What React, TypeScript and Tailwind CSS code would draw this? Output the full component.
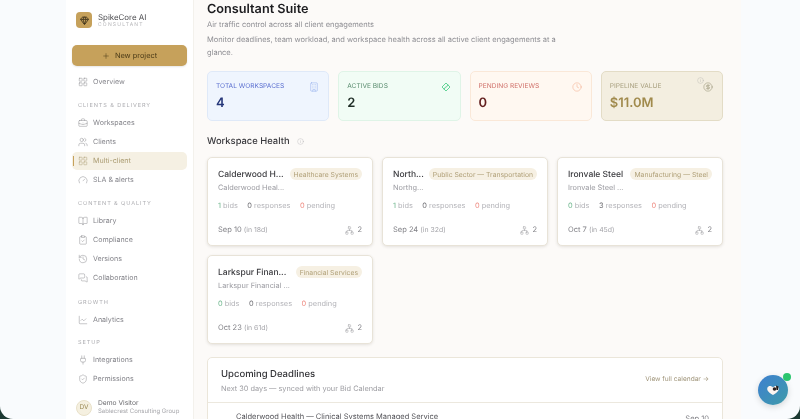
import React from "react";
import {
  LayoutGrid, BriefcaseBusiness, Users, Gauge, BookOpen, ClipboardCheck, History, MessagesSquare,
  ChartLine, Plug, ShieldCheck, Plus, Gem, Building, Clock, CircleDollarSign, Info, Network,
} from "lucide-react";

type NavItem = { label: string; Icon: React.ComponentType<any>; active?: boolean };

function Nav({ label, Icon, active }: NavItem) {
  return (
    <div className={`relative mb-px flex h-[18px] items-center gap-[5px] rounded-[5px] pl-[6px] ${active ? "bg-[#f5f0e3] text-[#a99a70]" : "text-[#85858b]"}`}>
      {active && <span className="absolute left-[1px] top-[4px] h-[10px] w-[1px] bg-[#c6a15b]" />}
      <Icon size={10} strokeWidth={1.1} className="shrink-0" />
      <span className="text-[7.1px] leading-none">{label}</span>
    </div>
  );
}

function Section({ title, items, gap }: { title: string; items: NavItem[]; gap: string }) {
  return (
    <div className={gap}>
      <div className="mb-[4px] pl-[6px] text-[5.6px] leading-[8px] tracking-[0.16em] text-[#aeaeb2] uppercase">{title}</div>
      {items.map((i) => <Nav key={i.label} {...i} />)}
    </div>
  );
}

function Kpi({ label, value, box, lab, val, icon }: { label: string; value: string; box: string; lab: string; val: string; icon: React.ReactNode }) {
  return (
    <div className={`relative h-[50px] flex-1 rounded-[5px] border px-[8px] pt-[9px] ${box}`}>
      <div className={`text-[6.6px] leading-[10px] uppercase ${lab}`}>{label}</div>
      <div className={`mt-[3px] text-[13px] leading-[18px] font-semibold ${val}`}>{value}</div>
      {icon}
    </div>
  );
}

function Card({ t, sub, tag, a, b, c, date, rel }: { t: string; sub: string; tag: string; a: number; b: number; c: number; date: string; rel: string }) {
  return (
    <div className="h-[89px] rounded-[5px] border border-[#e8e3d8] bg-white px-[10px] pt-[11px] shadow-[0_1px_3px_rgba(60,50,30,0.12)]">
      <div className="flex h-[13px] items-center justify-between gap-[4px]">
        <div className="text-[8.5px] leading-[13px] font-medium whitespace-nowrap text-[#3a3a3e]">{t}</div>
        <div className="mb-[3px] shrink-0 rounded-full bg-[#f6f0e3] px-[4px] py-[1.5px] text-[6.8px] leading-[9px] whitespace-nowrap text-[#b0a078]">{tag}</div>
      </div>
      <div className="text-[7.35px] leading-[12px] whitespace-nowrap text-[#9a9aa0]">{sub}</div>
      <div className="mt-[6px] flex gap-[9.5px] text-[7.4px] leading-[12px] text-[#b3b3b8]">
        <span><span className="text-[#6eb68d]">{a}</span> bids</span>
        <span><span className="text-[#6b6b70]">{b}</span> responses</span>
        <span><span className="text-[#ee8a80]">{c}</span> pending</span>
      </div>
      <div className="mt-[12px] flex items-center justify-between text-[7.5px] leading-[12px] text-[#808086]">
        <div>{date} <span className="text-[6.9px] text-[#a5a5aa]">(in {rel})</span></div>
        <div className="flex items-center gap-[3px]"><Network size={9} strokeWidth={1} />2</div>
      </div>
    </div>
  );
}

const cards = [
  { t: "Calderwood H...", sub: "Calderwood Heal...", tag: "Healthcare Systems", a: 1, b: 0, c: 0, date: "Sep 10", rel: "18d" },
  { t: "North...", sub: "Northg...", tag: "Public Sector — Transportation", a: 1, b: 0, c: 0, date: "Sep 24", rel: "32d" },
  { t: "Ironvale Steel", sub: "Ironvale Steel ...", tag: "Manufacturing — Steel", a: 0, b: 3, c: 0, date: "Oct 7", rel: "45d" },
  { t: "Larkspur Finan...", sub: "Larkspur Financial ...", tag: "Financial Services", a: 0, b: 0, c: 0, date: "Oct 23", rel: "61d" },
];

export default function App() {
  return (
    <div className="h-[419px] w-[800px] overflow-hidden bg-[#1d3a33] font-['Inter',sans-serif] [text-rendering:geometricPrecision] blur-[0.3px]">
      <div className="relative flex h-full overflow-hidden rounded-b-[13px] bg-[#f9fbfd]">
        <div className="w-[66px] shrink-0" />
        <aside className="flex w-[128px] shrink-0 flex-col border-r border-[#f3f1ec] bg-white px-[6px]">
          <div className="flex h-[45px] items-start gap-[6px] pl-[4px] pt-[12px]">
            <div className="flex h-[16px] w-[16px] items-center justify-center rounded-[4px] bg-[#c6a15b]">
              <Gem size={9} strokeWidth={2} className="text-[#2e2614]" />
            </div>
            <div>
              <div className="mt-[1px] text-[7.9px] leading-[9px] text-[#4b4b4f]">SpikeCore AI</div>
              <div className="text-[5px] leading-[6px] tracking-[0.24em] text-[#b5b5b8]">CONSULTANT</div>
            </div>
          </div>
          <div className="flex h-[21px] shrink-0 items-center justify-center gap-[5px] rounded-[5px] bg-[#c6a15b] text-[7.4px] text-[#4a3a17] shadow-[0_1px_2px_rgba(0,0,0,0.1)]">
            <Plus size={8} strokeWidth={1.5} /> New project
          </div>
          <div className="mt-[7px]"><Nav label="Overview" Icon={LayoutGrid} /></div>
          <Section gap="mt-[10px]" title="Clients & delivery" items={[
            { label: "Workspaces", Icon: BriefcaseBusiness },
            { label: "Clients", Icon: Users },
            { label: "Multi-client", Icon: LayoutGrid, active: true },
            { label: "SLA & alerts", Icon: Gauge },
          ]} />
          <Section gap="mt-[10px]" title="Content & quality" items={[
            { label: "Library", Icon: BookOpen },
            { label: "Compliance", Icon: ClipboardCheck },
            { label: "Versions", Icon: History },
            { label: "Collaboration", Icon: MessagesSquare },
          ]} />
          <Section gap="mt-[11px]" title="Growth" items={[{ label: "Analytics", Icon: ChartLine }]} />
          <Section gap="mt-[9px]" title="Setup" items={[
            { label: "Integrations", Icon: Plug },
            { label: "Permissions", Icon: ShieldCheck },
          ]} />
          <div className="mt-[10px] flex items-center gap-[6px] pl-[4px]">
            <div className="flex h-[16px] w-[16px] shrink-0 items-center justify-center rounded-full border border-[#e8e0c8] bg-[#f5f0e0] text-[6.5px] text-[#9a8a55]">DV</div>
            <div>
              <div className="text-[6.7px] leading-[9px] text-[#6a6a6e]">Demo Visitor</div>
              <div className="whitespace-nowrap text-[6px] leading-[8px] text-[#a8a8ac]">Sablecrest Consulting Group</div>
            </div>
          </div>
        </aside>
        <main className="w-[547px] shrink-0 bg-[#fcfaf8] px-[13px]">
          <h1 className="pt-[1px] text-[12.7px] leading-[18px] font-semibold text-[#1d1d20]">Consultant Suite</h1>
          <p className="text-[7.5px] leading-[12px] text-[#8f8f94]">Air traffic control across all client engagements</p>
          <p className="mt-[3px] w-[350px] text-[7.5px] leading-[12.5px] text-[#8f8f94]">Monitor deadlines, team workload, and workspace health across all active client engagements at a glance.</p>
          <div className="mt-[12px] flex w-[516px] gap-[9px]">
            <Kpi label="Total workspaces" value="4" box="border-[#dfe9f8] bg-[#eff5fe]" lab="text-[#5b6fd0]" val="text-[#26377a]" icon={<Building size={10} strokeWidth={1} className="absolute right-[9px] top-[10px] text-[#7c9be8]" />} />
            <Kpi label="Active bids" value="2" box="border-[#dff4e7] bg-[#f1fcf5]" lab="text-[#5b8d70]" val="text-[#1f2d26]" icon={
              <svg width="10" height="10" viewBox="0 0 10 10" fill="none" stroke="#55cf8d" strokeWidth="0.9" className="absolute right-[9px] top-[10px]">
                <path d="M5 1 L9 5 L5 9 L1 5 Z" />
                <path d="M3 7.5 L4.5 5 L5.5 5 L7 2.5" />
              </svg>
            } />
            <Kpi label="Pending reviews" value="0" box="border-[#fae8d8] bg-[#fff8f1]" lab="text-[#d0706a]" val="text-[#63201f]" icon={<Clock size={10} strokeWidth={1} className="absolute right-[9px] top-[10px] text-[#f09a70]" />} />
            <Kpi label="Pipeline value" value="$11.0M" box="border-[#e3dcc6] bg-[#f3eee0]" lab="text-[#aaa180]" val="text-[#a08a4c]" icon={<>
              <CircleDollarSign size={10} strokeWidth={1} className="absolute right-[9px] top-[10px] text-[#7d7656]" />
              <Info size={7} strokeWidth={1} className="absolute right-[18px] top-[5px] text-[#a5a5a0]" />
            </>} />
          </div>
          <div className="mt-[13px] flex items-center gap-[7px]">
            <h2 className="text-[9.4px] leading-[15px] font-medium text-[#3a3a3e]">Workspace Health</h2>
            <Info size={7} strokeWidth={1} className="text-[#a0a0a5]" />
          </div>
          <div className="mt-[8px] grid w-[516px] grid-cols-3 gap-[9px]">
            {cards.map((c) => <Card key={c.t} {...c} />)}
          </div>
          <div className="mt-[13px] w-[516px] rounded-[5px] border border-[#ebe6da] bg-white">
            <div className="flex h-[45px] items-center justify-between border-b border-[#ece8de] px-[13px]">
              <div className="pt-[2px]">
                <div className="text-[9.5px] leading-[15px] font-medium text-[#333337]">Upcoming Deadlines</div>
                <div className="mt-[1px] text-[7.35px] leading-[12px] text-[#9c9ca1]">Next 30 days — synced with your Bid Calendar</div>
              </div>
              <div className="text-[6.6px] text-[#a0957a]">View full calendar →</div>
            </div>
            <div className="flex items-start pt-[8px] pl-[28px] pr-[13px] text-[7.5px] leading-[12px] text-[#55555a]">
              <span className="flex-1">Calderwood Health — Clinical Systems Managed Service</span>
              <span className="mr-[14px] mt-[8px] h-[4px] w-[36px] bg-[#e3ebfb]" />
              <span className="mt-[2px] text-[#808086]">Sep 10</span>
            </div>
          </div>
        </main>
        <div className="absolute left-[758px] top-[375px] flex h-[30px] w-[30px] items-center justify-center rounded-full bg-gradient-to-br from-[#3f7fd0] to-[#3f9aa8] shadow-[0_2px_6px_rgba(0,0,0,0.15)]">
          <svg width="14" height="12" viewBox="0 0 14 12">
            <path d="M7 11 C2 8 0.5 6 1.5 3.5 C2.5 1.5 5.5 1.5 7 3.5 C8.5 1.5 11.5 1.5 12.5 3.5 C13.5 6 12 8 7 11Z" fill="#fbf4f0" />
            <circle cx="8.5" cy="5" r="1.8" fill="#2a2222" />
            <path d="M10 1.5 L12.5 2.5 L12 6 L10.5 6Z" fill="#1e1a1a" />
          </svg>
          <span className="absolute right-[-3px] top-[-2px] h-[8px] w-[8px] rounded-full bg-[#2cc66f]" />
        </div>
      </div>
    </div>
  );
}
